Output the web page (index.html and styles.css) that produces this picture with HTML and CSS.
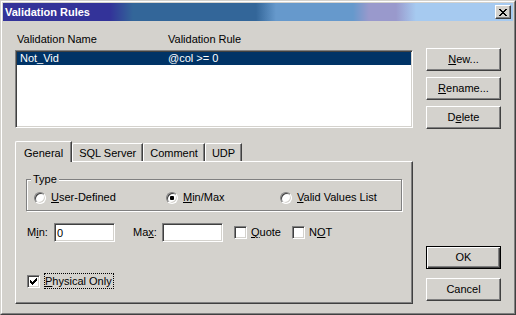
FILE: index.html
```html
<!DOCTYPE html>
<html lang="en">

<head>
    <meta charset="UTF-8">
    <title>Validation Rules</title>
    <link rel="stylesheet" href="styles.css">
</head>

<body>
    <div class="window">
        <div class="frame">
            <div class="titlebar">
                <span class="title">Validation Rules</span>
                <span class="close-btn">
                    <svg width="8" height="7" viewBox="0 0 8 7">
                        <path d="M0 0h2v1H0z M6 0h2v1H6z M1 1h2v1H1z M5 1h2v1H5z M2 2h4v1H2z M3 3h2v1H3z M2 4h4v1H2z M1 5h2v1H1z M5 5h2v1H5z M0 6h2v1H0z M6 6h2v1H6z" fill="#000" />
                    </svg>
                </span>
            </div>

            <div class="content">
                <div class="main">
                    <div class="list-header">
                        <span>Validation Name</span>
                        <span>Validation Rule</span>
                    </div>
                    <div class="list">
                        <div class="list-row selected">
                            <span>Not_Vid</span>
                            <span>@col &gt;= 0</span>
                        </div>
                    </div>

                    <div class="tabs">
                        <div class="tab active">General</div>
                        <div class="tab">SQL Server</div>
                        <div class="tab">Comment</div>
                        <div class="tab">UDP</div>
                    </div>
                    <div class="tab-panel">
                        <fieldset class="group">
                            <legend>Type</legend>
                            <div class="options">
                                <span class="option"><span class="radio"></span><span><u>U</u>ser-Defined</span></span>
                                <span class="option"><span class="radio checked"></span><span><u>M</u>in/Max</span></span>
                                <span class="option"><span class="radio"></span><span><u>V</u>alid Values List</span></span>
                            </div>
                        </fieldset>

                        <div class="range-row">
                            <span class="field-label">M<u>i</u>n:</span>
                            <input class="edit" type="text" value="0">
                            <span class="field-label max-label">Ma<u>x</u>:</span>
                            <input class="edit" type="text" value="">
                            <span class="option check-option"><span class="check"></span><span><u>Q</u>uote</span></span>
                            <span class="option check-option"><span class="check"></span><span>N<u>O</u>T</span></span>
                        </div>

                        <div class="physical-row">
                            <span class="check">
                                <svg width="9" height="9" viewBox="0 0 9 9">
                                    <path d="M1 3h1v3H1z M2 4h1v3H2z M3 5h1v3H3z M4 4h1v3H4z M5 3h1v3H5z M6 2h1v3H6z M7 1h1v3H7z" fill="#000" />
                                </svg>
                            </span>
                            <span class="focus"><u>P</u>hysical Only</span>
                        </div>
                    </div>
                </div>

                <div class="buttons">
                    <div class="btn"><span><u>N</u>ew...</span></div>
                    <div class="btn"><span><u>R</u>ename...</span></div>
                    <div class="btn"><span>D<u>e</u>lete</span></div>
                    <div class="btn default">OK</div>
                    <div class="btn cancel">Cancel</div>
                </div>
            </div>
        </div>
    </div>
</body>

</html>
```

FILE: styles.css
```css
* {
    box-sizing: border-box;
}

html,
body {
    margin: 0;
    padding: 0;
    background: #d4d2cd;
}

body {
    font: 11px/13px "Liberation Sans", Arial, sans-serif;
    color: #000;
}

.window {
    width: 516px;
    height: 315px;
    border: 1px solid;
    border-color: #d4d2cd #404040 #404040 #d4d2cd;
}

.frame {
    height: 100%;
    border: 1px solid;
    border-color: #fff #808080 #808080 #fff;
    padding: 1px;
}

.titlebar {
    height: 18px;
    display: flex;
    align-items: center;
    padding: 0 2px;
    background: linear-gradient(90deg, #333399 107px, #336699 130px, #336699 253px, #6699cc 273px,
            #6699cc 350px, #9999cc 366px, #9999cc 393px, #a6caf0 413px);
}

.title {
    flex: 1;
    color: #fff;
    font-weight: bold;
}

.close-btn {
    width: 16px;
    height: 14px;
    display: flex;
    align-items: center;
    justify-content: center;
    background: #d4d2cd;
    border: 1px solid;
    border-color: #fff #404040 #404040 #fff;
    box-shadow: inset -1px -1px #808080;
}

.close-btn svg {
    display: block;
}

.content {
    display: flex;
    gap: 13px;
    padding: 0 12px;
}

.main {
    width: 398px;
    padding-top: 12px;
}

.list-header {
    display: grid;
    grid-template-columns: 151px auto;
    padding-left: 2px;
}

.list {
    margin-top: 4px;
    height: 78px;
    background: #fff;
    border: 1px solid;
    border-color: #808080 #fff #fff #808080;
    padding: 1px;
    box-shadow: inset 1px 1px #404040, inset -1px -1px #d4d2cd;
}

.list-row {
    display: grid;
    grid-template-columns: 148px auto;
    padding-left: 3px;
}

.list-row.selected {
    background: #003366;
    color: #fff;
}

/* tabs */

.tabs {
    display: flex;
    align-items: flex-end;
    margin-top: 13px;
    height: 20px;
}

.tab {
    height: 18px;
    padding: 3px 6px 1px;
    border: 1px solid;
    border-bottom: 0;
    border-color: #fff #404040 #404040 #fff;
    border-top-left-radius: 2px;
    box-shadow: inset -1px 0 #808080;
    white-space: nowrap;
}

.tab.active {
    height: 21px;
    padding: 5px 8px 2px;
    margin-bottom: -1px;
    position: relative;
    z-index: 1;
    background: #d4d2cd;
}

.tab-panel {
    height: 143px;
    border: 1px solid;
    border-color: #fff #404040 #404040 #fff;
    box-shadow: inset -1px -1px #808080;
    padding: 11px 10px 0;
}

.group {
    margin: 0;
    padding: 5px 4px 6px;
    border: 1px solid #808080;
    box-shadow: 1px 1px 0 #fff, inset 1px 1px 0 #fff;
}

.group legend {
    padding: 0 2px;
    background: #d4d2cd;
}

.options {
    display: grid;
    grid-template-columns: 132px 114px auto;
    padding-left: 3px;
}

.option {
    display: flex;
    align-items: center;
    gap: 5px;
    white-space: nowrap;
}

.radio {
    width: 12px;
    height: 12px;
    border-radius: 50%;
    background: #fff;
    border: 1px solid;
    border-color: #808080 #fff #fff #808080;
    box-shadow: inset 1px 1px #404040, inset -1px -1px #d4d2cd;
}

.radio.checked {
    background: radial-gradient(circle, #000 0 2px, #fff 2.5px);
}

.check {
    width: 13px;
    height: 13px;
    padding: 1px;
    flex: none;
    background: #fff;
    border: 1px solid;
    border-color: #808080 #fff #fff #808080;
    box-shadow: inset 1px 1px #404040, inset -1px -1px #d4d2cd;
}

.check svg {
    display: block;
}

/* min / max row */

.range-row {
    display: flex;
    align-items: center;
    margin-top: 12px;
    height: 19px;
    padding-left: 1px;
}

.field-label {
    width: 27px;
}

.max-label {
    width: 29px;
    margin-left: 18px;
}

.edit {
    width: 61px;
    height: 19px;
    margin: 0;
    padding: 0 2px;
    font: inherit;
    color: #000;
    background: #fff;
    border: 1px solid;
    border-color: #808080 #fff #fff #808080;
    box-shadow: inset 1px 1px #404040, inset -1px -1px #d4d2cd;
    outline: none;
}

.check-option {
    gap: 4px;
    margin-left: 11px;
}

.physical-row {
    display: flex;
    align-items: center;
    gap: 4px;
    margin-top: 31px;
    padding-left: 1px;
}

.focus {
    border: 1px dotted #000;
    padding: 1px 1px 0 0;
}

/* right hand buttons */

.buttons {
    width: 75px;
    display: flex;
    flex-direction: column;
    padding-top: 27px;
    padding-bottom: 3px;
}

.btn {
    height: 23px;
    display: flex;
    align-items: center;
    justify-content: center;
    background: #d4d2cd;
    border: 1px solid;
    border-color: #fff #404040 #404040 #fff;
    box-shadow: inset -1px -1px #808080;
}

.btn+.btn {
    margin-top: 6px;
}

.btn.default {
    margin-top: auto;
    border-color: #000;
    box-shadow: inset 1px 1px #fff, inset -1px -1px #404040, inset -2px -2px #808080;
}

.btn.cancel {
    margin-top: 9px;
}
```
